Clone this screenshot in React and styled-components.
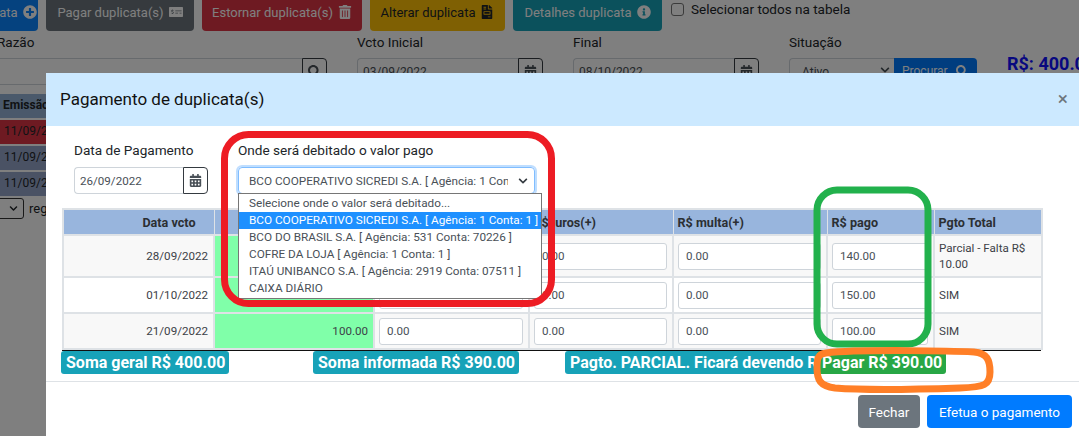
import React from 'react';
import styled, { createGlobalStyle } from 'styled-components';
import {
  FaPlusCircle,
  FaMoneyCheckAlt,
  FaTrashAlt,
  FaFileInvoice,
  FaInfoCircle,
  FaSearch,
  FaCalendarAlt,
  FaChevronDown
} from 'react-icons/fa';

const GlobalStyle = createGlobalStyle`
  html, body {
    margin: 0;
    padding: 0;
    background: #fff;
  }
  * {
    box-sizing: border-box;
  }
`;

const Page = styled.div`
  position: relative;
  width: 1079px;
  height: 436px;
  overflow: hidden;
  background: #fff;
  color: #212529;
  font-family: Roboto, "Liberation Sans", sans-serif;
  font-size: 13px;
`;

/* ---- page behind the dialog ---- */

const Toolbar = styled.div`
  display: flex;
  align-items: flex-start;
  gap: 8px;
  margin-top: -7px;
  margin-left: -70px;
`;

const ToolButton = styled.button`
  display: flex;
  align-items: center;
  justify-content: center;
  gap: 5px;
  width: ${({ width }) => width}px;
  height: 38px;
  border: 0;
  border-radius: 4px;
  background: ${({ bg }) => bg};
  color: ${({ fg }) => fg || '#fff'};
  font: inherit;
  font-size: 13px;
  white-space: nowrap;
  padding: 0;

  svg {
    width: 14px;
    height: 14px;
  }
`;

const SelectAll = styled.label`
  display: flex;
  align-items: center;
  gap: 7px;
  margin-left: 1px;
  margin-top: 8px;
  font-size: 13.5px;
`;

const CheckBox = styled.span`
  width: 13px;
  height: 13px;
  border: 1px solid #767676;
  border-radius: 3px;
  background: #fff;
`;

const Filters = styled.div`
  display: grid;
  grid-template-columns: 330px 186px 186px 188px auto;
  column-gap: 30px;
  margin-top: 1px;
  margin-left: -3px;
`;

const FilterLabel = styled.div`
  height: 26px;
  line-height: 20px;
  font-size: 13.5px;
`;

const FilterRow = styled.div`
  display: flex;
  height: 27px;
`;

const FilterInput = styled.div`
  flex: 1;
  display: flex;
  justify-content: space-between;
  border: 1px solid #ced4da;
  border-right: 0;
  border-radius: 4px 0 0 4px;
  padding: 6px 4px 0 ${({ inset }) => inset || 5}px;
  font-size: 12px;
  color: #495057;
  background: #fff;
`;

const AddonButton = styled.div`
  display: flex;
  align-items: center;
  justify-content: center;
  width: 25px;
  border: 1px solid #343a40;
  border-radius: 0 4px 4px 0;
  color: #495057;
  font-size: 13px;
`;

const SearchButton = styled.div`
  display: flex;
  align-items: center;
  gap: 8px;
  width: 83px;
  padding-left: 8px;
  padding-bottom: 2px;
  background: #007bff;
  border-radius: 0 4px 4px 0;
  color: #fff;
  font-size: 12px;
`;

const Total = styled.div`
  margin-top: 21px;
  white-space: nowrap;
  color: #1010ff;
  font-size: 18px;
  font-weight: 700;
`;

const ListHead = styled.div`
  width: 46px;
  height: 24px;
  margin-top: 9px;
  padding: 4px 3px;
  background: #95b3d7;
  overflow: hidden;
  font-size: 12px;
  font-weight: 700;
`;

const ListRow = styled.div`
  width: 46px;
  height: 24px;
  margin-top: 2px;
  padding: 4px 4px;
  background: ${({ bg }) => bg};
  overflow: hidden;
  font-size: 12px;
`;

const PageSize = styled.div`
  display: flex;
  align-items: center;
  gap: 5px;
  margin-top: 2px;
  margin-left: -14px;
  height: 21px;
  font-size: 13px;
`;

const PageSizeBox = styled.div`
  display: flex;
  align-items: center;
  justify-content: flex-end;
  width: 38px;
  height: 21px;
  padding-right: 5px;
  border: 1px solid #333;
  border-radius: 3px;
  background: #fff;
  font-size: 9px;
`;

const Backdrop = styled.div`
  position: absolute;
  inset: 0;
  background: rgba(0, 0, 0, 0.5);
`;

/* ---- dialog ---- */

const Modal = styled.div`
  position: absolute;
  left: 46px;
  top: 73px;
  width: 1060px;
  height: 400px;
  background: #fff;
`;

const ModalHeader = styled.div`
  display: flex;
  align-items: center;
  justify-content: space-between;
  width: 1033px;
  height: 53px;
  padding: 0 11px 2px 14px;
  background: #cce9ff;
`;

const ModalTitle = styled.div`
  font-size: 17px;
  color: #111;
`;

const CloseMark = styled.span`
  font-size: 19px;
  color: #6c757d;
  line-height: 1;
`;

const ModalBody = styled.div`
  width: 1033px;
  height: 256px;
  padding: 14px 16px 0;
  border-bottom: 1px solid #dee2e6;
`;

const FormRow = styled.div`
  display: flex;
  gap: 30px;
  padding-left: 12px;
  height: 68px;
`;

const Field = styled.div`
  position: relative;
  width: ${({ width }) => width}px;
`;

const FieldLabel = styled.div`
  height: 27px;
  line-height: 20px;
  font-size: 13.6px;
  white-space: nowrap;
`;

const DateRow = styled.div`
  display: flex;
  height: 27px;
`;

const DateValue = styled.div`
  flex: 1;
  display: flex;
  align-items: center;
  padding-left: 5px;
  border: 1px solid #ced4da;
  border-right: 0;
  border-radius: 4px 0 0 4px;
  font-size: 11.6px;
  color: #495057;
`;

const SelectBox = styled.div`
  display: flex;
  align-items: center;
  justify-content: space-between;
  height: 27px;
  padding: 0 6px 0 10px;
  border: 1px solid #80bdff;
  border-radius: 4px;
  box-shadow: 0 0 0 2px rgba(0, 123, 255, 0.25);
  font-size: 11.75px;
  color: #495057;
`;

const SelectText = styled.span`
  width: 259px;
  overflow: hidden;
  white-space: nowrap;
`;

const OptionList = styled.div`
  position: absolute;
  top: 53px;
  left: 0;
  z-index: 2;
  width: 304px;
  padding-top: 1px;
  background: #fff;
  border: 1px solid #767676;
`;

const Option = styled.div`
  height: 17.1px;
  line-height: 17px;
  padding-left: 10px;
  background: ${({ selected }) => (selected ? '#1e90ff' : 'transparent')};
  color: ${({ selected }) => (selected ? '#fff' : '#495057')};
  font-size: 11.75px;
  white-space: nowrap;
  overflow: hidden;
`;

const Table = styled.table`
  width: 979px;
  table-layout: fixed;
  border-collapse: collapse;
  border: 2px solid #dee2e6;
  border-bottom: 0;
`;

const HeadCell = styled.th`
  height: 26px;
  padding: 0 4px;
  padding-right: ${({ right }) => (right ? '18px' : '4px')};
  text-align: ${({ right }) => (right ? 'right' : 'left')};
  background: #98b5dd;
  border-left: 1px solid #dee2e6;
  font-size: 12.6px;
  font-weight: 700;
  color: #2b2f33;
`;

const BodyRow = styled.tr`
  height: ${({ height }) => height}px;
  background: ${({ striped }) => (striped ? '#f8f8f8' : '#fff')};
`;

const Cell = styled.td`
  padding: 0 5px 0 4px;
  border: 2px solid #dee2e6;
  text-align: ${({ right }) => (right ? 'right' : 'left')};
  background: ${({ green }) => (green ? '#80ffa9' : 'transparent')};
  font-size: 11.6px;
  line-height: 16px;
  color: #3c4147;
`;

const MoneyInput = styled.div`
  display: flex;
  align-items: center;
  height: 27px;
  padding-left: 7px;
  background: #fff;
  border: 1px solid #ced4da;
  border-radius: 3px;
  font-size: 11.6px;
  color: #495057;
`;

const TableEnd = styled.div`
  width: 979px;
  height: 1px;
  background: #111;
`;

const Summary = styled.div`
  display: grid;
  grid-template-columns: repeat(4, 252px);
  width: 979px;
  margin-left: -1px;
`;

const Badge = styled.div`
  justify-self: start;
  height: 23px;
  padding: 0 4px 0 5px;
  border-radius: 3px;
  background: ${({ bg }) => bg};
  color: #fff;
  font-size: 16px;
  font-weight: 700;
  line-height: 23px;
  white-space: nowrap;
  position: relative;
  z-index: ${({ bg }) => (bg === '#28a745' ? 1 : 0)};
`;

const ModalFooter = styled.div`
  display: flex;
  justify-content: flex-end;
  gap: 7px;
  width: 1033px;
  padding: 13px 7px 0 0;
`;

const FooterButton = styled.button`
  width: ${({ width }) => width}px;
  height: 33px;
  border: 0;
  border-radius: 4px;
  background: ${({ bg }) => bg};
  color: #fff;
  font: inherit;
  font-size: 13.5px;
  padding: 0;
`;

const Annotations = styled.svg`
  position: absolute;
  inset: 0;
  z-index: 3;
  pointer-events: none;
`;

const BANKS = [
  'Selecione onde o valor será debitado...',
  'BCO COOPERATIVO SICREDI S.A. [ Agência: 1 Conta: 1 ]',
  'BCO DO BRASIL S.A. [ Agência: 531 Conta: 70226 ]',
  'COFRE DA LOJA [ Agência: 1 Conta: 1 ]',
  'ITAÚ UNIBANCO S.A. [ Agência: 2919 Conta: 07511 ]',
  'CAIXA DIÁRIO'
];

const ROWS = [
  { date: '28/09/2022', value: '150.00', paid: '140.00', total: 'Parcial - Falta R$ 10.00', height: 42, striped: true },
  { date: '01/10/2022', value: '150.00', paid: '150.00', total: 'SIM', height: 36 },
  { date: '21/09/2022', value: '100.00', paid: '100.00', total: 'SIM', height: 36, striped: true }
];

const COLUMNS = [151, 160, 155, 144, 154, 107, 108];

const App = () => (
  <Page>
    <GlobalStyle />

    <Toolbar>
      <ToolButton width={108} bg="#0a84ff">Nova duplicata <FaPlusCircle /></ToolButton>
      <ToolButton width={148} bg="#6c757d">Pagar duplicata(s) <FaMoneyCheckAlt /></ToolButton>
      <ToolButton width={160} bg="#dc3545">Estornar duplicata(s) <FaTrashAlt /></ToolButton>
      <ToolButton width={135} bg="#ffc107" fg="#212529">Alterar duplicata <FaFileInvoice /></ToolButton>
      <ToolButton width={149} bg="#17a2b8">Detalhes duplicata <FaInfoCircle /></ToolButton>
      <SelectAll><CheckBox />Selecionar todos na tabela</SelectAll>
    </Toolbar>

    <Filters>
      <div>
        <FilterLabel>Razão</FilterLabel>
        <FilterRow>
          <FilterInput />
          <AddonButton><FaSearch /></AddonButton>
        </FilterRow>
      </div>
      <div>
        <FilterLabel>Vcto Inicial</FilterLabel>
        <FilterRow>
          <FilterInput>03/09/2022</FilterInput>
          <AddonButton><FaCalendarAlt /></AddonButton>
        </FilterRow>
      </div>
      <div>
        <FilterLabel>Final</FilterLabel>
        <FilterRow>
          <FilterInput>08/10/2022</FilterInput>
          <AddonButton><FaCalendarAlt /></AddonButton>
        </FilterRow>
      </div>
      <div>
        <FilterLabel>Situação</FilterLabel>
        <FilterRow>
          <FilterInput inset={12}>Ativo <FaChevronDown size={10} /></FilterInput>
          <SearchButton>Procurar <FaSearch /></SearchButton>
        </FilterRow>
      </div>
      <Total>R$: 400.00</Total>
    </Filters>

    <ListHead>Emissão</ListHead>
    <ListRow bg="#dc3545">11/09/2022</ListRow>
    <ListRow bg="#95a5c8">11/09/2022</ListRow>
    <ListRow bg="#95a5c8">11/09/2022</ListRow>
    <PageSize>
      <PageSizeBox><FaChevronDown /></PageSizeBox>
      registros
    </PageSize>

    <Backdrop />

    <Modal>
      <ModalHeader>
        <ModalTitle>Pagamento de duplicata(s)</ModalTitle>
        <CloseMark>×</CloseMark>
      </ModalHeader>

      <ModalBody>
        <FormRow>
          <Field width={134}>
            <FieldLabel>Data de Pagamento</FieldLabel>
            <DateRow>
              <DateValue>26/09/2022</DateValue>
              <AddonButton><FaCalendarAlt /></AddonButton>
            </DateRow>
          </Field>
          <Field width={297}>
            <FieldLabel>Onde será debitado o valor pago</FieldLabel>
            <SelectBox>
              <SelectText>BCO COOPERATIVO SICREDI S.A. [ Agência: 1 Conta: 1 ]</SelectText>
              <FaChevronDown size={10} color="#343a40" />
            </SelectBox>
            <OptionList>
              {BANKS.map((bank, i) => (
                <Option key={bank} selected={i === 1}>{bank}</Option>
              ))}
            </OptionList>
          </Field>
        </FormRow>

        <Table>
          <colgroup>
            {COLUMNS.map((width, i) => <col key={i} width={width} />)}
          </colgroup>
          <thead>
            <tr>
              <HeadCell right>Data vcto</HeadCell>
              <HeadCell right>R$ valor</HeadCell>
              <HeadCell>R$ desconto(-)</HeadCell>
              <HeadCell>R$ juros(+)</HeadCell>
              <HeadCell>R$ multa(+)</HeadCell>
              <HeadCell>R$ pago</HeadCell>
              <HeadCell>Pgto Total</HeadCell>
            </tr>
          </thead>
          <tbody>
            {ROWS.map((row) => (
              <BodyRow key={row.date} height={row.height} striped={row.striped}>
                <Cell right>{row.date}</Cell>
                <Cell right green>{row.value}</Cell>
                <Cell><MoneyInput>0.00</MoneyInput></Cell>
                <Cell><MoneyInput>0.00</MoneyInput></Cell>
                <Cell><MoneyInput>0.00</MoneyInput></Cell>
                <Cell><MoneyInput>{row.paid}</MoneyInput></Cell>
                <Cell>{row.total}</Cell>
              </BodyRow>
            ))}
          </tbody>
        </Table>
        <TableEnd />

        <Summary>
          <Badge bg="#17a2b8">Soma geral R$ 400.00</Badge>
          <Badge bg="#17a2b8">Soma informada R$ 390.00</Badge>
          <Badge bg="#17a2b8">Pagto. PARCIAL. Ficará devendo R$ 10.00</Badge>
          <Badge bg="#28a745">Pagar R$ 390.00</Badge>
        </Summary>
      </ModalBody>

      <ModalFooter>
        <FooterButton width={62} bg="#6c757d">Fechar</FooterButton>
        <FooterButton width={145} bg="#007bff">Efetua o pagamento</FooterButton>
      </ModalFooter>
    </Modal>

    {/* marks drawn by hand over the screenshot */}
    <Annotations width="1079" height="436" fill="none" strokeWidth="7">
      <rect x="224.5" y="134.5" width="327" height="169" rx="24" stroke="#ed1c24" />
      <rect x="817" y="190" width="111" height="154" rx="20" stroke="#22b14c" />
      <path
        d="M826 353 C860 349 955 351 974 352 C987 353 990 360 990 372 C990 385 985 387 960 388 C900 390 860 390 835 388 C820 386 817 380 817 368 C817 358 818 354 826 353 Z"
        stroke="#ff7f27"
      />
    </Annotations>
  </Page>
);

export default App;
